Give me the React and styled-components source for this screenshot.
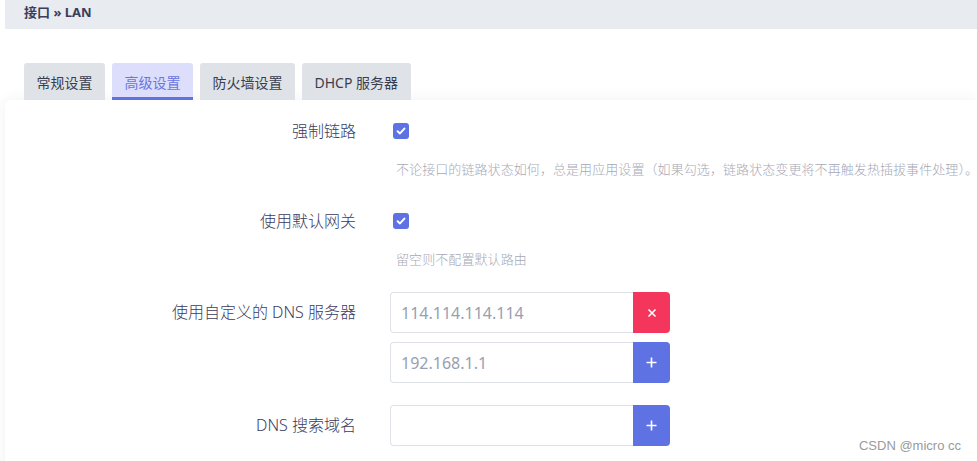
import React from "react";
import styled, { createGlobalStyle } from "styled-components";

const GlobalStyle = createGlobalStyle`
  html, body {
    margin: 0;
    padding: 0;
    background: #ffffff;
    overflow: hidden;
  }
  body {
    font-family: "Noto Sans", "Noto Sans CJK SC", sans-serif;
    color: #32325d;
  }
`

const Page = styled.div`
  position: relative;
  width: 977px;
  height: 461px;
  padding-left: 5px;
  box-sizing: border-box;
  overflow: hidden;
`
const Header = styled.div`
  height: 29px;
  box-sizing: border-box;
  padding: 3px 19px 0;
  background: #e8ebef;
  font-size: 13px;
  font-weight: 700;
  line-height: 18px;
  color: #3a3d5c;
`
const TabBar = styled.div`
  display: flex;
  gap: 7px;
  margin-top: 34px;
  padding-left: 19px;
`
const Tab = styled.div`
  height: 37px;
  box-sizing: border-box;
  padding: 3px 12.5px 0;
  display: flex;
  align-items: center;
  font-size: 14px;
  border-radius: 3px 3px 0 0;
  background: ${p => (p.$active ? "#dcdefb" : "#dfe3e8")};
  color: ${p => (p.$active ? "#6a76e0" : "#3a3d50")};
  border-bottom: 3px solid ${p => (p.$active ? "#5e72e4" : "transparent")};
`
const Card = styled.div`
  background: #ffffff;
  border-radius: 6px 0 0 0;
  box-shadow: 0 0 14px rgba(50, 50, 93, 0.07);
  padding-top: 12px;
  height: 400px;
`
const Row = styled.div`
  display: grid;
  grid-template-columns: 351px 1fr;
  column-gap: 34px;
  margin-bottom: ${p => p.$gap}px;
`
const Label = styled.div`
  text-align: right;
  font-size: 16px;
  font-weight: 300;
  line-height: ${p => p.$h}px;
  color: #3a3c5e;
  white-space: nowrap;
`
const Field = styled.div`
  display: flex;
  flex-direction: column;
  gap: 9px;
  min-width: 0;
`
const CheckLine = styled.div`
  height: 38px;
  display: flex;
  align-items: center;
  padding-left: 3px;
`
const CheckBox = styled.span`
  width: 16px;
  height: 16px;
  border-radius: 3px;
  background: #5e72e4;
  display: flex;
  align-items: center;
  justify-content: center;
`
const Hint = styled.div`
  font-size: 13px;
  font-weight: 300;
  line-height: 20px;
  letter-spacing: 0.08px;
  color: #a6a9b6;
  padding-left: 6px;
  white-space: nowrap;
`
const InputGroup = styled.div`
  display: flex;
  width: 280px;
  height: 41px;
`
const TextBox = styled.div`
  flex: 1;
  box-sizing: border-box;
  border: 1px solid #dee1e6;
  border-right: none;
  border-radius: 4px 0 0 4px;
  padding-left: 10px;
  display: flex;
  align-items: center;
  font-size: 16px;
  color: #97a0b2;
`
const GroupButton = styled.div`
  width: 37px;
  border-radius: 0 4px 4px 0;
  background: ${p => (p.$danger ? "#f5365c" : "#5e72e4")};
  display: flex;
  align-items: center;
  justify-content: center;
`
const Watermark = styled.div`
  position: absolute;
  right: 16px;
  bottom: 8px;
  font-family: "Liberation Sans", Arial, sans-serif;
  font-size: 13px;
  color: #9a9a9a;
`

const Check = () => (
  <svg width="10" height="10" viewBox="0 0 10 10">
    <path d="M1.6 5.2 L4 7.4 L8.4 2.6" fill="none" stroke="#fff" strokeWidth="2" strokeLinecap="round" strokeLinejoin="round" />
  </svg>
)
const Cross = () => (
  <svg width="10" height="10" viewBox="0 0 10 10">
    <path d="M1.5 1.5 L8.5 8.5 M8.5 1.5 L1.5 8.5" stroke="#fff" strokeWidth="1.6" />
  </svg>
)
const Plus = () => (
  <svg width="11" height="11" viewBox="0 0 11 11">
    <path d="M5.5 0.5 V10.5 M0.5 5.5 H10.5" stroke="#fff" strokeWidth="1.6" />
  </svg>
)

const tabs = ["常规设置", "高级设置", "防火墙设置", "DHCP 服务器"];

function App() {
  return (
    <>
      <GlobalStyle />
      <Page>
        <Header>接口 » LAN</Header>
        <TabBar>
          {tabs.map((t, i) => (
            <Tab key={i} $active={i === 1}>{t}</Tab>
          ))}
        </TabBar>
        <Card>
          <Row $gap={23}>
            <Label $h={38}>强制链路</Label>
            <Field>
              <CheckLine><CheckBox><Check /></CheckBox></CheckLine>
              <Hint>不论接口的链路状态如何，总是用应用设置（如果勾选，链路状态变更将不再触发热插拔事件处理）。</Hint>
            </Field>
          </Row>
          <Row $gap={23}>
            <Label $h={38}>使用默认网关</Label>
            <Field>
              <CheckLine><CheckBox><Check /></CheckBox></CheckLine>
              <Hint>留空则不配置默认路由</Hint>
            </Field>
          </Row>
          <Row $gap={22}>
            <Label $h={41}>使用自定义的 DNS 服务器</Label>
            <Field>
              <InputGroup>
                <TextBox>114.114.114.114</TextBox>
                <GroupButton $danger><Cross /></GroupButton>
              </InputGroup>
              <InputGroup>
                <TextBox>192.168.1.1</TextBox>
                <GroupButton><Plus /></GroupButton>
              </InputGroup>
            </Field>
          </Row>
          <Row $gap={0}>
            <Label $h={41}>DNS 搜索域名</Label>
            <Field>
              <InputGroup>
                <TextBox />
                <GroupButton><Plus /></GroupButton>
              </InputGroup>
            </Field>
          </Row>
        </Card>
        <Watermark>CSDN @micro cc</Watermark>
      </Page>
    </>
  );
}

export default App;
